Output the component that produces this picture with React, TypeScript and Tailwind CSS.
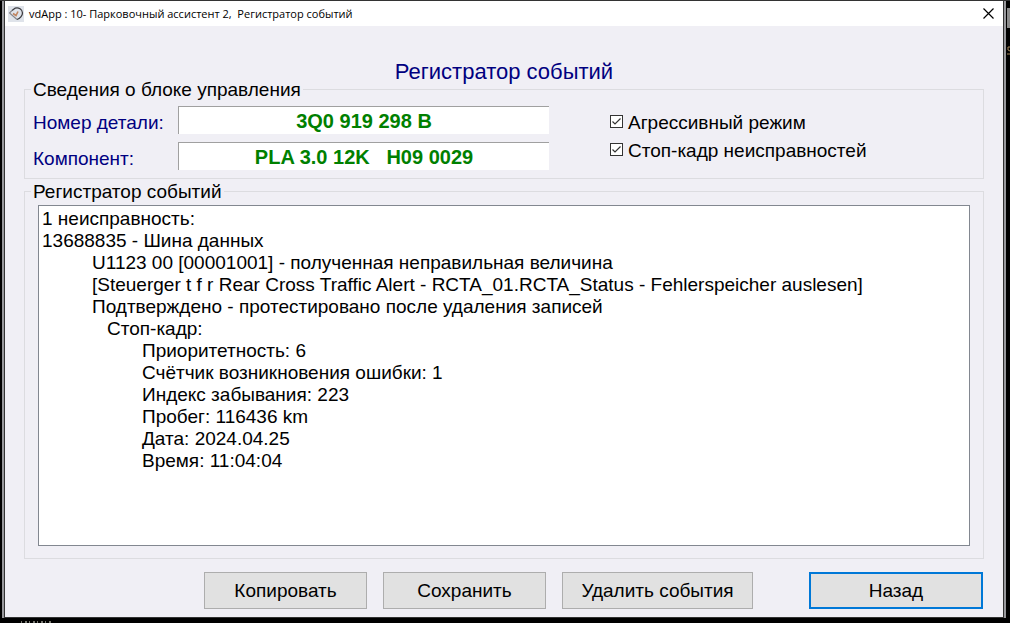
import { ReactNode } from "react"
import clsx from "clsx"

const logLines = [
  { text: "1 неисправность:", indent: "pl-0" },
  { text: "13688835 - Шина данных", indent: "pl-0" },
  {
    text: "U1123 00 [00001001] - полученная неправильная величина",
    indent: "pl-[50px]"
  },
  {
    text: "[Steuerger t f r Rear Cross Traffic Alert - RCTA_01.RCTA_Status - Fehlerspeicher auslesen]",
    indent: "pl-[50px]"
  },
  {
    text: "Подтверждено - протестировано после удаления записей",
    indent: "pl-[50px]"
  },
  { text: "Стоп-кадр:", indent: "pl-[65px]" },
  { text: "Приоритетность: 6", indent: "pl-[100px]" },
  { text: "Счётчик возникновения ошибки: 1", indent: "pl-[100px]" },
  { text: "Индекс забывания: 223", indent: "pl-[100px]" },
  { text: "Пробег: 116436 km", indent: "pl-[100px]" },
  { text: "Дата: 2024.04.25", indent: "pl-[100px]" },
  { text: "Время: 11:04:04", indent: "pl-[100px]" }
]

const AppIcon = () => (
  <svg viewBox="0 0 16 16" className="size-4 bg-[#dfe3ea]" fill="none">
    <path
      d="M4 4.500 7 2.200C10.500.8 14.500 3.500 14.500 7c0 2.500-2.500 5.500-5.500 6.500"
      stroke="#3c3c40"
      strokeWidth="1.300"
    />
    <path d="M4 4.500 1.500 7 9 13.500" stroke="#85858a" strokeWidth="1.100" />
    <path d="M5 7.500 8 9.500 10 5.500" stroke="#c08560" strokeWidth="1.600" />
  </svg>
)

const TitleBar = () => (
  <header className="flex h-[25px] items-center bg-white pl-[3px] pr-2">
    <AppIcon />
    <span className="ml-[5px] flex-1 whitespace-pre font-['Open_Sans','Noto_Sans',sans-serif] text-[11px] leading-4">
      {"vdApp : 10- Парковочный ассистент 2,  Регистратор событий"}
    </span>
    <button type="button" aria-label="Закрыть" className="p-px">
      <svg viewBox="0 0 11 11" className="size-[11px]" fill="none">
        <path d="M.5.5l10 10M10.500.5l-10 10" stroke="#000" strokeWidth="1.200" />
      </svg>
    </button>
  </header>
)

// edges of whatever is open behind the window
const Backdrop = () => (
  <div aria-hidden="true">
    <div className="absolute right-0 top-[7px] h-5 w-[3px] bg-[#8c8c8c]" />
    <svg
      viewBox="0 0 3 9"
      className="absolute right-0 top-[45px] h-[9px] w-[3px]"
      fill="none"
    >
      <path d="M3 1H1v3l2 1M0 8h3" stroke="#a8895c" />
    </svg>
    <svg
      viewBox="0 0 30 2"
      className="absolute bottom-0 left-[21px] h-0.5 w-[30px]"
    >
      <path d="M0 1h30" stroke="#77776f" strokeWidth="2" strokeDasharray="1 3 2 2" />
    </svg>
  </div>
)

interface GroupProps {
  title: string
  className?: string
  children: ReactNode
}

const Group = ({ title, className, children }: GroupProps) => (
  <fieldset className={clsx("min-w-0 border border-[#dcdce0] pl-2", className)}>
    <legend className="-ml-0.5 px-0.5 pt-0.5 leading-[18px]">{title}</legend>
    {children}
  </fieldset>
)

interface FieldProps {
  id: string
  label: string
  value: string
}

const Field = ({ id, label, value }: FieldProps) => (
  <div className="flex h-7 items-center">
    <label htmlFor={id} className="w-[145px] pt-1.5 text-[#000080]">
      {label}
    </label>
    <input
      id={id}
      readOnly
      value={value}
      className="h-7 min-w-0 flex-1 border-l border-t border-[#a0a0a0] bg-white text-center text-xl font-bold text-[#008000] outline-none"
    />
  </div>
)

const Check = ({ label }: { label: string }) => (
  <label className="flex h-7 items-center gap-[5px]">
    <span className="grid">
      <input
        type="checkbox"
        defaultChecked
        className="peer col-start-1 row-start-1 size-[13px] appearance-none border border-[#333] bg-white"
      />
      <svg
        viewBox="0 0 13 13"
        className="pointer-events-none invisible col-start-1 row-start-1 size-[13px] peer-checked:visible"
        fill="none"
      >
        <path d="M2.500 6.500 5 9l5.500-5.500" stroke="#333" strokeWidth="1.200" />
      </svg>
    </span>
    <span className="pt-[3px]">{label}</span>
  </label>
)

interface ActionProps {
  label: string
  className: string
}

const Action = ({ label, className }: ActionProps) => (
  <button
    type="button"
    className={clsx("h-[37px] bg-[#e1e1e1] text-center", className)}
  >
    {label}
  </button>
)

export default function App() {
  return (
    <div className="relative flex min-h-screen flex-col border-t border-[#333] bg-black pb-[5px] pl-[2px] pr-1 font-['Liberation_Sans',Arial,sans-serif] text-[19px] leading-[22px] text-black">
      <Backdrop />
      <div className="flex flex-1 flex-col border-x-2 border-[#98989c] bg-[#98989c]">
        <div className="flex flex-1 flex-col border-x border-b border-[#333] bg-[#f0eff5]">
          <TitleBar />
          <main className="flex flex-1 flex-col pb-2 pl-[19px] pr-[19px] pt-[39px]">
            <h1 className="text-center text-[22px] leading-[14px] text-[#000080]">
              Регистратор событий
            </h1>

            <Group title="Сведения о блоке управления">
              <div className="flex pb-2 pt-[7px]">
                <div className="flex w-[516px] flex-col gap-2">
                  <Field id="part" label="Номер детали:" value="3Q0 919 298 B" />
                  <Field
                    id="component"
                    label="Компонент:"
                    value="PLA 3.0 12K   H09 0029"
                  />
                </div>
                <div className="ml-[61px] pt-px">
                  <Check label="Агрессивный режим" />
                  <Check label="Стоп-кадр неисправностей" />
                </div>
              </div>
            </Group>

            <Group
              title="Регистратор событий"
              className="mt-0.5 pb-3 pr-[13px]"
            >
              <ul className="ml-[5px] mt-1 min-h-[341px] border border-[#828790] bg-white px-[3px] pt-0.5">
                {logLines.map((line) => (
                  <li key={line.text} className={line.indent}>
                    {line.text}
                  </li>
                ))}
              </ul>
            </Group>

            <div className="mt-auto flex gap-4 pl-[180px] pr-px">
              <Action
                label="Копировать"
                className="w-[163px] border border-[#adadad]"
              />
              <Action
                label="Сохранить"
                className="w-[163px] border border-[#adadad]"
              />
              <Action
                label="Удалить события"
                className="w-[191px] border border-[#adadad]"
              />
              <Action
                label="Назад"
                className="ml-auto w-[174px] border-2 border-[#0078d7]"
              />
            </div>
          </main>
        </div>
      </div>
    </div>
  )
}
